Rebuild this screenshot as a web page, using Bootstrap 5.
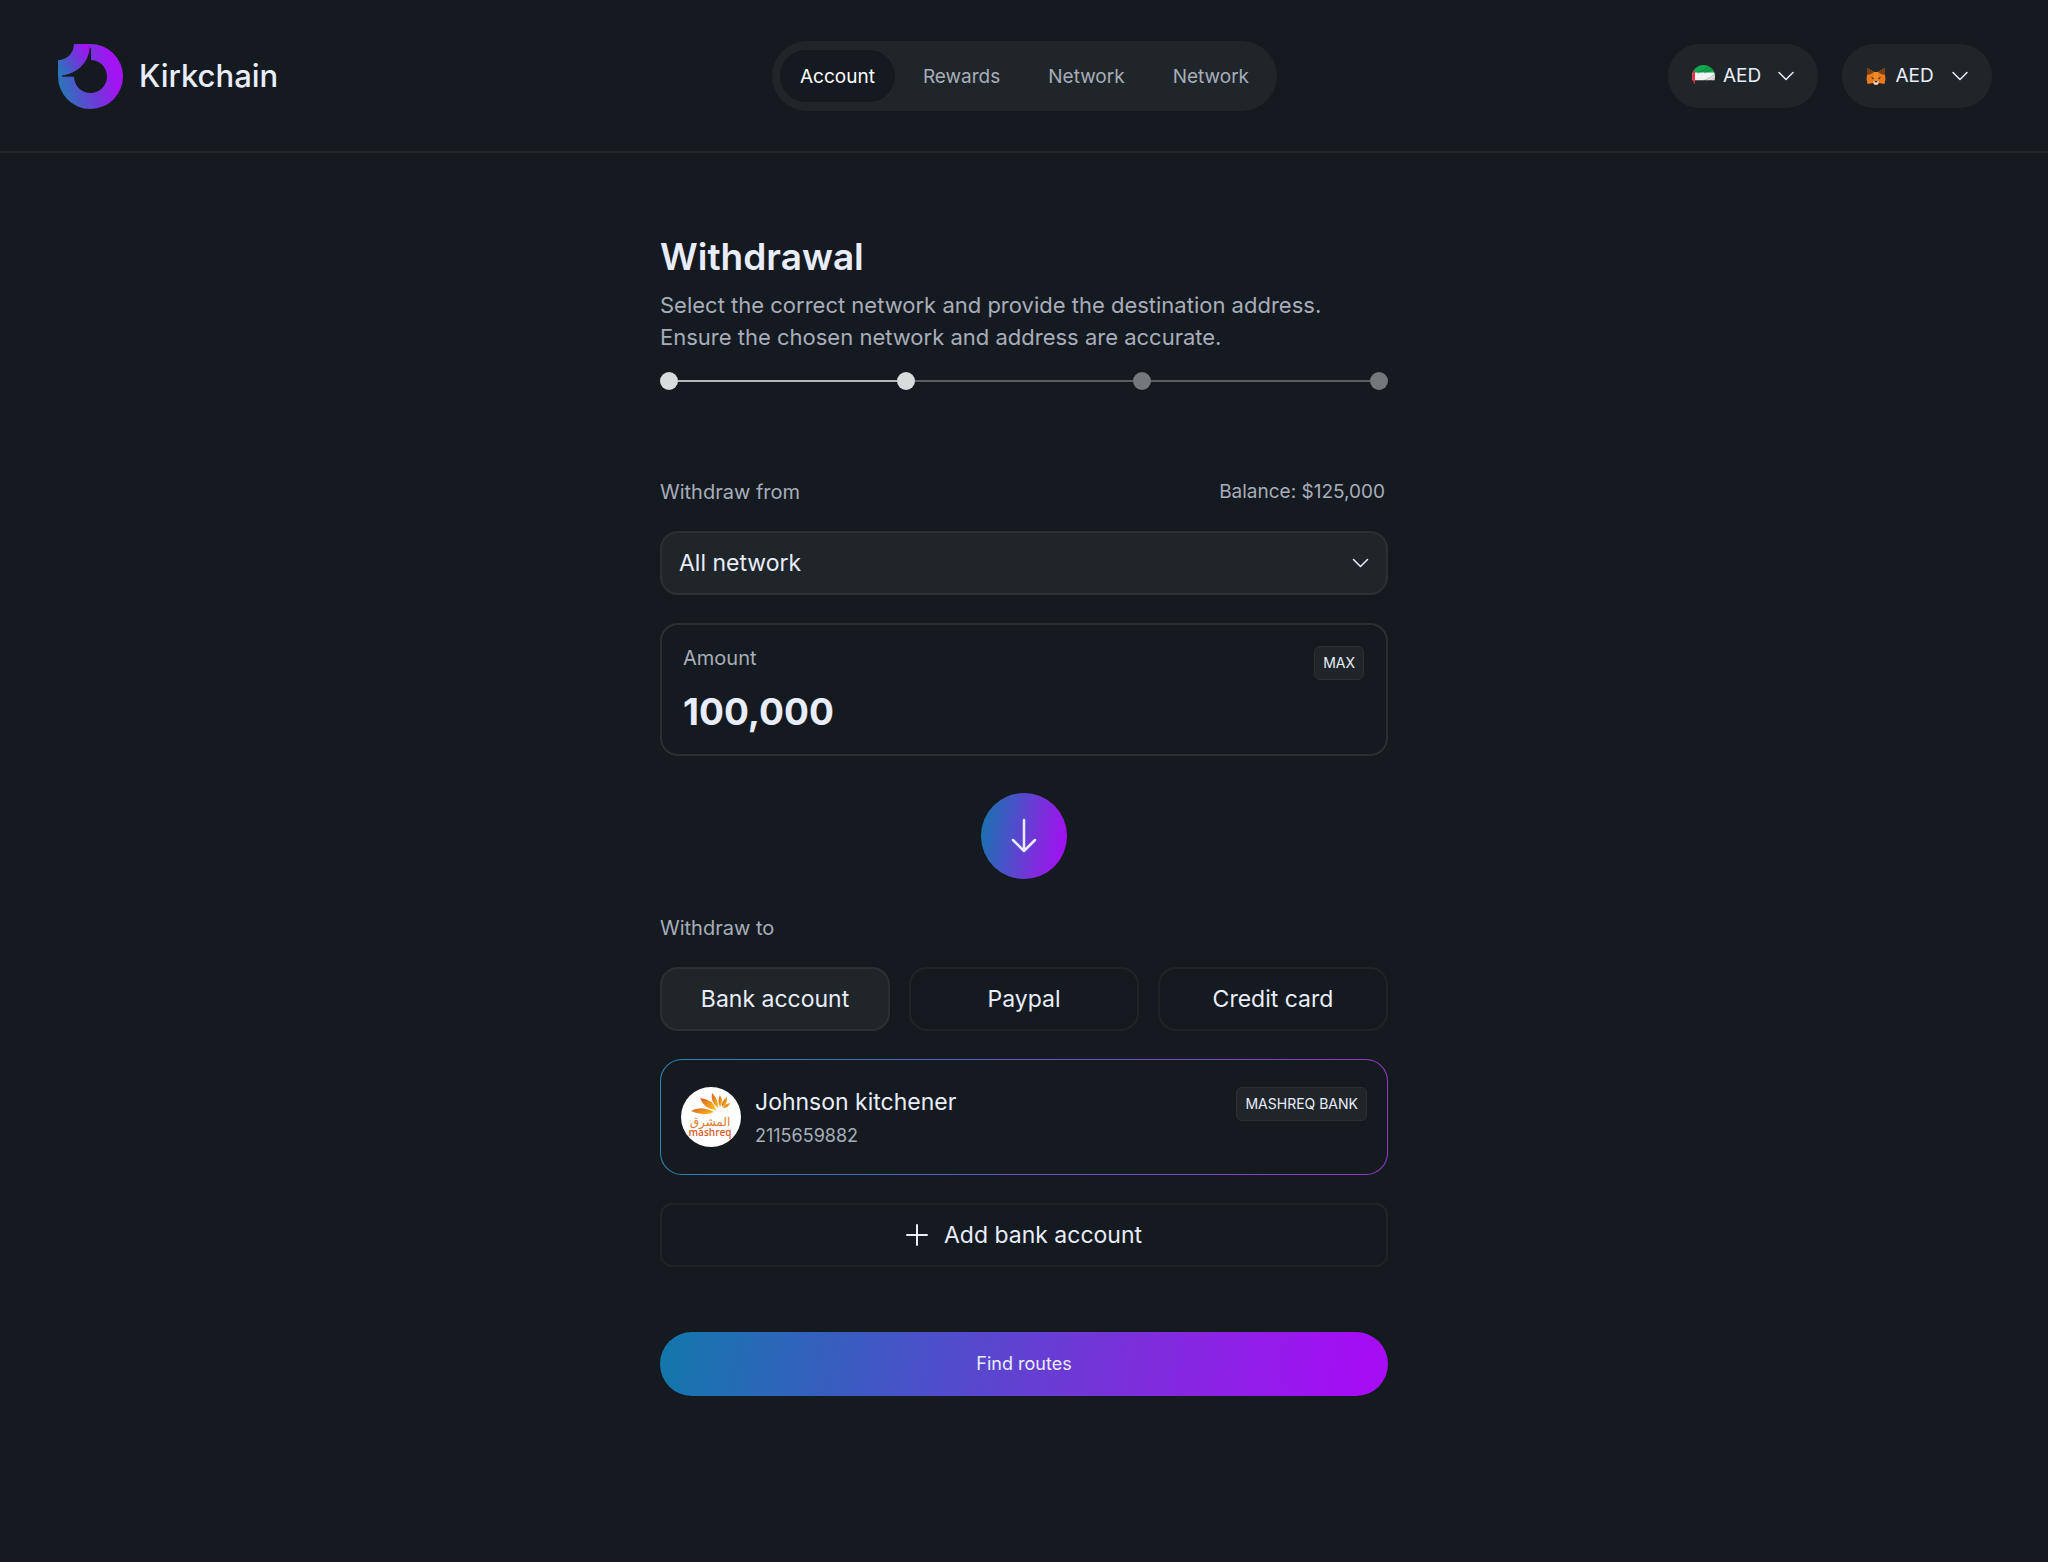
<!DOCTYPE html>
<html lang="en">
<head>
<meta charset="utf-8">
<meta name="viewport" content="width=device-width, initial-scale=1">
<title>Kirkchain – Withdrawal</title>
<link href="https://cdn.jsdelivr.net/npm/bootstrap@5.3.0/dist/css/bootstrap.min.css" rel="stylesheet">
<style>
  :root { --ink: #151a20; --raised: #20252a; --edge: #2b3034; --edge-soft: #1f2427; --bright: #e9edfb; --muted: #a8adb9; --ramp: linear-gradient(100deg, #1278ab 0%, #4a51c9 36%, #7a30da 64%, #a50df5 96%); }
  body { background: var(--ink); color: var(--bright); font-family: Inter, "Liberation Sans", sans-serif; font-size: 20px; line-height: 28px; min-height: 100vh; }
  .topbar { border-bottom: 2px solid #22272c; padding: 41px 56px 40px 57px; }
  .side { flex: 1 1 0; }
  .brand-name { font-size: 31px; line-height: 40px; font-weight: 500; color: var(--bright); }
  .tabs { background: var(--raised); border-radius: 36px; padding: 9px 8px; gap: 8px; font-size: 19px; }
  .tabs .nav-link { color: var(--muted); padding: 13px 20px 11px; border-radius: 26px; font-size: 19px; }
  .tabs .nav-link.active { background: var(--ink); color: #fff; }
  .picker { background: var(--raised); border-radius: 32px; height: 64px; width: 150px; padding: 0 24px; font-size: 19px; }
  .bare { appearance: none; background: transparent; border: 0; outline: 0; padding: 0; color: var(--bright); }
  .flow { max-width: 728px; padding-top: 80px; }
  .page-title { font-size: 37px; line-height: 48px; font-weight: 600; }
  .intro { font-size: 22px; line-height: 32px; color: var(--muted); }
  .steps { margin-top: 19px; }
  .dot { width: 18px; height: 18px; border-radius: 50%; background: #74787c; }
  .dot.done { background: #d9dcdd; }
  .bar { height: 2px; background: #5a5f64; }
  .bar.done { background: #b4b8bc; }
  .quiet { color: var(--muted); }
  .source { margin-top: 88px; margin-bottom: 25px; padding-right: 3px; }
  .balance { font-size: 19px; }
  .stack { margin-top: 28px; }
  .swap-row { margin-top: 37px; }
  .target { margin: 35px 0 25px; }
  .field { height: 64px; border: 2px solid var(--edge); border-radius: 18px; background: var(--raised); padding: 0 17px; font-size: 23px; }
  .panel { border: 2px solid var(--edge); border-radius: 18px; padding: 19px 22px 18px 21px; }
  .amount { font-size: 37px; line-height: 48px; font-weight: 700; }
  .chip { background: var(--raised); border: 1px solid var(--edge); border-radius: 6px; font-size: 14px; line-height: 20px; padding: 6px 8px; color: var(--bright); }
  .panel .chip { margin-top: 2px; }
  .swap { width: 86px; height: 86px; border-radius: 50%; border: 0; background: var(--ramp); }
  .choice { height: 64px; border: 2px solid var(--edge-soft); border-radius: 18px; background: transparent; color: var(--bright); font-size: 23px; }
  .choice.chosen { background: var(--raised); border-color: var(--edge); }
  .add { border-radius: 12px; }
  .payee { border: 1px solid transparent; border-radius: 22px; padding: 27px 20px; gap: 14px; background: linear-gradient(var(--ink), var(--ink)) padding-box, linear-gradient(90deg, #2a86b3, #5c5bc4 45%, #9438ca) border-box; }
  .payee-name { font-size: 23px; line-height: 30px; }
  .payee-no { color: var(--muted); font-size: 18px; line-height: 38px; height: 30px; }
  .go { height: 64px; border: 0; border-radius: 32px; background: var(--ramp); color: var(--bright); font-size: 18px; margin-top: 65px; margin-bottom: 64px; }
  .gap-choice { gap: 19px; }
</style>
</head>
<body>
<header class="topbar d-flex align-items-center">
  <div class="side d-flex">
    <a href="#" class="d-flex align-items-center gap-3 text-decoration-none">
      <svg width="66" height="66" viewBox="0 0 66 66" aria-hidden="true">
        <defs><linearGradient id="lg" x1="0" y1=".65" x2="1" y2=".4"><stop offset="0" stop-color="#2878b8"/><stop offset=".5" stop-color="#6b3bd8"/><stop offset=".85" stop-color="#a313f3"/></linearGradient>
        <linearGradient id="lg2" x1="0" y1=".8" x2="1" y2=".2"><stop offset="0" stop-color="#2878b8"/><stop offset=".55" stop-color="#6a3cd8"/><stop offset="1" stop-color="#a80ff5"/></linearGradient></defs>
        <path d="M33 1A32.500 32.500 0 1 1 1 33L17 33.500A16.500 16.500 0 1 0 33.500 17Z" fill="url(#lg)"/>
        <path d="M17 1H33C33 19 21 32 4 33L1 33V17C10 17 17 10 17 1Z" fill="url(#lg2)"/>
        <path d="M33 5H34V33.500H5V32.500C20 31 32 19 33 5Z" fill="#151a20"/>
      </svg>
      <span class="brand-name">Kirkchain</span>
    </a>
  </div>
  <nav class="tabs nav" aria-label="Main">
    <a class="nav-link active" aria-current="page" href="#">Account</a>
    <a class="nav-link" href="#">Rewards</a>
    <a class="nav-link" href="#">Network</a>
    <a class="nav-link" href="#">Network</a>
  </nav>
  <div class="side d-flex justify-content-end gap-4">
    <label class="picker d-flex align-items-center justify-content-between">
      <svg width="23" height="23" viewBox="0 0 23 23" aria-hidden="true">
        <defs><clipPath id="fc"><circle cx="11.500" cy="11.500" r="11.500"/></clipPath></defs>
        <g clip-path="url(#fc)"><path fill="#12a84f" d="M0 0H23V8H0z"/><path fill="#f3f3f3" d="M0 7.500H23V15.500H0z"/><path fill="#24272a" d="M0 15.500H23V23H0z"/><path fill="#e0304a" d="M0 6H3V19H0z"/>
        <path d="M5 8Q13 6 19 0M12 8Q18 6 22 2M12 15.500Q18 14 23 9M17 16Q20 15 23 12" stroke="#000" stroke-opacity=".18" stroke-width="1.500" fill="none"/></g>
      </svg>
      <select class="bare" aria-label="Currency"><option>AED</option></select>
      <svg class="ms-2" width="16" height="10" viewBox="0 0 16 10" fill="none" stroke="#e9edfb" stroke-width="1.500" stroke-linecap="round" stroke-linejoin="round" aria-hidden="true"><path d="M1 1.500L8 8.500L15 1.500"/></svg>
    </label>
    <label class="picker d-flex align-items-center justify-content-between">
      <svg width="20" height="19" viewBox="0 0 20 19" aria-hidden="true">
        <path fill="#e8791c" d="M1 1L8 5H12L19 1V8L19.500 12L18.500 17L13 16L11.500 18H8.500L7 16L1.500 17L.5 12L1 8Z"/>
        <path fill="#7a3f17" d="M1 1L8 5L5 7L1 8ZM19 1L12 5L15 7L19 8Z"/>
        <path fill="#f08a26" d="M8 5H12L13 12L10 14L7 12Z"/>
        <path fill="#3a2a22" d="M5 10L8 11L7 12.500ZM15 10L12 11L13 12.500ZM8.500 14H11.500V15.500H8.500Z"/>
        <path fill="#e8e4e0" d="M7 14.500L8.500 14V15.500H11.500V14L13 14.500L11.500 17.500H8.500Z"/>
      </svg>
      <select class="bare" aria-label="Wallet currency"><option>AED</option></select>
      <svg class="ms-2" width="16" height="10" viewBox="0 0 16 10" fill="none" stroke="#e9edfb" stroke-width="1.500" stroke-linecap="round" stroke-linejoin="round" aria-hidden="true"><path d="M1 1.500L8 8.500L15 1.500"/></svg>
    </label>
  </div>
</header>

<main class="flow mx-auto">
  <h1 class="page-title mb-2">Withdrawal</h1>
  <p class="intro mb-0">Select the correct network and provide the destination address.<br>Ensure the chosen network and address are accurate.</p>
  <div class="steps d-flex align-items-center" role="img" aria-label="Step 2 of 4">
    <span class="dot done"></span><span class="bar done flex-fill"></span>
    <span class="dot done"></span><span class="bar flex-fill"></span>
    <span class="dot"></span><span class="bar flex-fill"></span>
    <span class="dot"></span>
  </div>

  <div class="source d-flex justify-content-between quiet">
    <label for="from">Withdraw from</label>
    <span class="balance">Balance: $125,000</span>
  </div>
  <div class="field d-flex align-items-center">
    <select id="from" class="bare flex-fill"><option>All network</option></select>
    <svg width="17" height="10" viewBox="0 0 16 10" fill="none" stroke="#e9edfb" stroke-width="1.500" stroke-linecap="round" stroke-linejoin="round" aria-hidden="true"><path d="M1 1.500L8 8.500L15 1.500"/></svg>
  </div>
  <div class="panel stack d-flex align-items-start justify-content-between">
    <div class="flex-fill">
      <label for="amount" class="quiet d-block mb-3">Amount</label>
      <input id="amount" class="bare amount w-100 d-block" type="text" inputmode="decimal" value="100,000">
    </div>
    <button type="button" class="chip">MAX</button>
  </div>

  <div class="swap-row d-flex justify-content-center">
    <button type="button" class="swap" aria-label="Continue to destination">
      <svg width="28" height="36" viewBox="0 0 28 36" fill="none" stroke="#e9edfb" stroke-width="2.500" stroke-linecap="round" stroke-linejoin="round" aria-hidden="true"><path d="M14 2V33M3 22L14 33L25 22"/></svg>
    </button>
  </div>

  <p class="quiet target">Withdraw to</p>
  <div class="d-flex gap-choice" role="group" aria-label="Withdraw to">
    <button type="button" class="choice chosen col p-0" aria-pressed="true">Bank account</button>
    <button type="button" class="choice col p-0" aria-pressed="false">Paypal</button>
    <button type="button" class="choice col p-0" aria-pressed="false">Credit card</button>
  </div>

  <div class="payee stack d-flex align-items-start">
    <svg width="60" height="60" viewBox="0 0 60 60" aria-hidden="true">
      <defs><linearGradient id="petal" x1="0" y1="0" x2="1" y2=".6"><stop offset="0" stop-color="#dc5a20"/><stop offset="1" stop-color="#f9b51f"/></linearGradient></defs>
      <circle cx="30" cy="30" r="30" fill="#fff"/>
      <g fill="url(#petal)">
        <path d="M10 24Q20 18 33 25Q22 30 10 24Z"/>
        <path d="M19 11Q32 12 35 23Q23 22 19 11Z"/>
        <path d="M31 6Q38 13 37 21Q29 15 31 6Z"/>
        <path d="M39 8Q43 14 39 20Q36 14 39 8Z"/>
        <path d="M46 10Q47 17 41 20Q40 14 46 10Z"/>
        <path d="M49 16Q48 21 42 21Q43 17 49 16Z"/>
      </g>
      <text x="29" y="39" text-anchor="middle" font-family="DejaVu Sans, sans-serif" font-size="12" fill="#e07a2c">المشرق</text>
      <text x="29" y="49" text-anchor="middle" font-family="Open Sans, sans-serif" font-weight="600" font-size="10" fill="#dc5a2a">mashreq</text>
    </svg>
    <div class="flex-fill">
      <div class="payee-name">Johnson kitchener</div>
      <div class="payee-no">2115659882</div>
    </div>
    <span class="chip">MASHREQ BANK</span>
  </div>

  <button type="button" class="choice add stack w-100 d-flex align-items-center justify-content-center">
    <svg class="me-3" width="22" height="22" viewBox="0 0 22 22" stroke="#e9edfb" stroke-width="2" stroke-linecap="round" aria-hidden="true"><path d="M11 1V21M1 11H21"/></svg>
    Add bank account
  </button>
  <button type="button" class="go w-100">Find routes</button>
</main>
<script src="https://cdn.jsdelivr.net/npm/bootstrap@5.3.0/dist/js/bootstrap.bundle.min.js"></script>
</body>
</html>
